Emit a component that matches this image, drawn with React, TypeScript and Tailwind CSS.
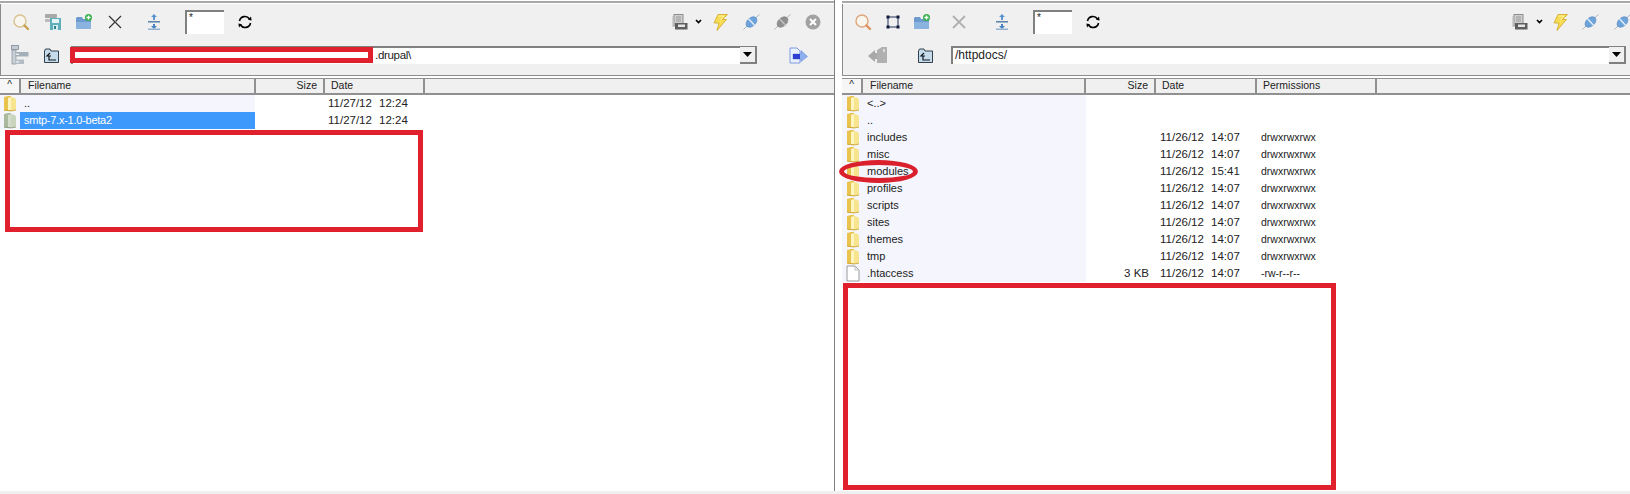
const FolderIcon = ({ dim = false }: { dim?: boolean }) => (
  <svg width="14" height="17" viewBox="0 0 14 17" className="shrink-0">
    <path d="M1 2 L5 1 L8 1 L8 16 L2 16 L1 15 Z" fill={dim ? "#a9b99c" : "#e8c44e"} />
    <path d="M8 2 L12 3 L13 5 L13 15 L11 16 L8 16 Z" fill={dim ? "#c8d4bc" : "#f7e48e"} />
    <path d="M5 3 L8 2 L8 15 L5 15 Z" fill={dim ? "#d4dccb" : "#fdf4c0"} />
    <path d="M1 15 L8 16 L13 15" stroke={dim ? "#8c9c80" : "#c9a136"} strokeWidth="0.8" fill="none" />
  </svg>
);

const DocIcon = () => (
  <svg width="14" height="17" viewBox="0 0 14 17" className="shrink-0">
    <path d="M1 1 H9 L13 5 V16 H1 Z" fill="#fff" stroke="#9a9a9a" />
    <path d="M9 1 V5 H13" fill="none" stroke="#bdbdbd" />
  </svg>
);

const SearchIcon = ({ light = false }: { light?: boolean }) => (
  <svg width="18" height="18" viewBox="0 0 18 18">
    <circle cx="8" cy="8" r="6" fill="#f7f5ee" stroke={light ? "#dfa67c" : "#d9c28e"} strokeWidth="1.4" />
    <path d="M12.5 12.5 L16 16" stroke={light ? "#e08f5e" : "#c9a04e"} strokeWidth="2.4" strokeLinecap="round" />
  </svg>
);

const ServerIcon = () => (
  <svg width="18" height="18" viewBox="0 0 18 18">
    <rect x="1" y="1" width="12" height="4" rx="1" fill="#a8a8a8" />
    <rect x="1" y="6" width="5" height="3" fill="#bcbcbc" />
    <rect x="6" y="5" width="11" height="12" fill="#5fb0bb" />
    <rect x="8" y="6" width="7" height="4" fill="#e4f4f4" />
    <rect x="9" y="12" width="5" height="5" fill="#d6edef" />
    <rect x="10" y="13" width="2" height="3" fill="#2d7f8e" />
  </svg>
);

const SquareIcon = () => (
  <svg width="14" height="14" viewBox="0 0 14 14">
    <rect x="2" y="2" width="10" height="10" fill="none" stroke="#20305a" strokeWidth="1" />
    <rect x="0.5" y="0.5" width="3" height="3" fill="#111a3a" />
    <rect x="10.5" y="0.5" width="3" height="3" fill="#111a3a" />
    <rect x="0.5" y="10.5" width="3" height="3" fill="#111a3a" />
    <rect x="10.5" y="10.5" width="3" height="3" fill="#111a3a" />
  </svg>
);

const NewFolderIcon = () => (
  <svg width="18" height="16" viewBox="0 0 18 16">
    <path d="M1 4 L2 3 L7 3 L8 5 L16 5 L16 15 L1 15 Z" fill="#6d9bd0" />
    <path d="M1 8 L16 8 L16 15 L1 15 Z" fill="#8ab3e0" />
    <circle cx="13.5" cy="3.5" r="3.5" fill="#36b04a" />
    <path d="M13.5 1.5 V5.5 M11.5 3.5 H15.5" stroke="#fff" strokeWidth="1.3" />
  </svg>
);

const CrossIcon = ({ muted = false }: { muted?: boolean }) => (
  <svg width="14" height="14" viewBox="0 0 14 14">
    <path d="M1 1 L13 13 M13 1 L1 13" stroke={muted ? "#b0b0b0" : "#333"} strokeWidth={muted ? 1.8 : 1.2} />
    {!muted && <path d="M2 1 L13 12" stroke="#999" strokeWidth="0.8" />}
  </svg>
);

const FilterIcon = () => (
  <svg width="14" height="16" viewBox="0 0 14 16">
    <path d="M7 0 L10 3 L8 3 L8 6 L6 6 L6 3 L4 3 Z" fill="#5b93cc" />
    <rect x="1" y="7" width="12" height="1.5" fill="#5b7fa8" />
    <path d="M6 10 L8 10 L8 12 L10 12 L7 15 L4 12 L6 12 Z" fill="#4a82bd" />
    <rect x="1" y="14.5" width="12" height="1.5" fill="#8fb2d3" />
  </svg>
);

const RefreshIcon = () => (
  <svg width="14" height="14" viewBox="0 0 14 14" fill="none">
    <path d="M1.5 6 A5.5 5.5 0 0 1 11.5 4" stroke="#000" strokeWidth="1.6" />
    <path d="M12.5 8 A5.5 5.5 0 0 1 2.5 10" stroke="#000" strokeWidth="1.6" />
    <path d="M10 4.8 L13.6 5.4 L13 1.6 Z" fill="#000" />
    <path d="M4 9.2 L0.4 8.6 L1 12.4 Z" fill="#000" />
  </svg>
);

const TreeIcon = () => (
  <svg width="18" height="20" viewBox="0 0 18 20">
    <rect x="0.5" y="0.5" width="7" height="4" fill="#c3ccd4" stroke="#7f8b96" strokeWidth="0.8" />
    <rect x="1" y="5" width="4" height="14" fill="#c9cfd5" stroke="#8d98a2" strokeWidth="0.8" />
    <rect x="5" y="7" width="12.5" height="4.5" fill="#a3afb9" />
    <rect x="5" y="8.5" width="3" height="1.5" fill="#e6eaee" />
    <rect x="4" y="14.5" width="9" height="4.5" fill="#b4bdc5" />
    <rect x="5" y="16" width="3" height="1.5" fill="#e6eaee" />
  </svg>
);

const UpFolderIcon = () => (
  <svg width="15" height="15" viewBox="0 0 15 15">
    <path d="M0.5 3 L1.5 1 L6 1 L7 3 L14.5 3 L14.5 14.5 L0.5 14.5 Z" fill="#c6dceb" stroke="#1e2c3a" strokeWidth="0.9" />
    <path d="M6 5 L3 8 L5 8 L5 12 L12 12 M5 8 L7 8" fill="none" stroke="#101820" strokeWidth="1.2" />
  </svg>
);

const PrinterIcon = () => (
  <svg width="16" height="16" viewBox="0 0 16 16">
    <rect x="2" y="0.5" width="9" height="11" fill="#cfcfcf" stroke="#8e8e8e" />
    <path d="M4 3 H9 M4 5 H9 M4 7 H9" stroke="#9a9a9a" />
    <rect x="0.5" y="2" width="2" height="11" fill="#b9b9b9" />
    <rect x="3" y="9" width="12.5" height="6.5" fill="#5e5e5e" />
    <rect x="6" y="10.5" width="7" height="2.5" fill="#e5e5e5" />
  </svg>
);

const Chevron = () => (
  <svg width="7" height="6" viewBox="0 0 7 6">
    <path d="M1 1 L3.5 3.5 L6 1" fill="none" stroke="#000" strokeWidth="1.7" />
  </svg>
);

const BoltIcon = () => (
  <svg width="15" height="17" viewBox="0 0 15 17">
    <path d="M5 0.5 L14.5 0.5 L9.5 5.5 L13.5 5.5 L4 16.5 L6 9 L1 9 Z" fill="#f7dc55" stroke="#d5ad2a" strokeWidth="0.9" />
    <path d="M5.5 2 L11 2 L7.5 6" fill="none" stroke="#fff3a8" strokeWidth="1" />
  </svg>
);

const PlugIcon = ({ off = false }: { off?: boolean }) => {
  const body = off ? "#8f8f8f" : "#6fa3dc";
  const edge = off ? "#808080" : "#4f82bd";
  const line = off ? "#b3b3b3" : "#a6b4c4";
  const band = off ? "#c4c4c4" : "#e3effa";
  return (
    <svg width="17" height="16" viewBox="0 0 17 16">
      <path d="M0.5 15.5 L4 12 M13 3.5 L16.5 0.5" stroke={line} strokeWidth="1" />
      <ellipse cx="8.5" cy="8" rx="6.2" ry="4.2" transform="rotate(-42 8.5 8)" fill={body} stroke={edge} strokeWidth="0.6" />
      <path d="M5.5 4.8 L11.5 11.2" stroke={band} strokeWidth="1.4" />
    </svg>
  );
};

const CloseCircleIcon = () => (
  <svg width="16" height="16" viewBox="0 0 16 16">
    <circle cx="8" cy="8" r="7.5" fill="#a2a2a2" />
    <path d="M5 5 L11 11 M11 5 L5 11" stroke="#fff" strokeWidth="2" />
  </svg>
);

const SendIcon = () => (
  <svg width="19" height="17" viewBox="0 0 19 17">
    <path d="M1 1 H8 L11 4 V16 H1 Z" fill="#eaf0fb" stroke="#7f9be0" />
    <path d="M4 7 H12 V3.5 L18.5 9.5 L12 14.5 V12 H4 Z" fill="#8fb0ee" stroke="#6d8fe0" strokeWidth="0.6" />
    <rect x="4" y="7" width="7" height="5" fill="#2d3fd0" />
  </svg>
);

const BackIcon = () => (
  <svg width="20" height="17" viewBox="0 0 20 17">
    <path d="M0 9 L7 3 L7 6 L10 6 L10 12 L7 12 L7 15 Z" fill="#a8a8a8" />
    <path d="M9 3 L14 0 L19 0 L19 16 L9 16 Z" fill="#b0b0b0" />
    <rect x="15" y="2" width="2" height="3" fill="#dcdcdc" />
  </svg>
);

const Slot = ({ w, children }: { w: string; children: React.ReactNode }) => (
  <div className={`${w} shrink-0 flex items-center justify-center`}>{children}</div>
);

const FilterBox = () => (
  <div className="w-[39px] h-[24px] shrink-0 bg-white border-t-2 border-l-2 border-[#808080] text-[10px] leading-[12px] pl-[2px] text-[#222]">
    *
  </div>
);

const Combo = ({ children, className }: { children?: React.ReactNode; className: string }) => (
  <div className={`${className} h-[18px] bg-white border-t-2 border-l-2 border-[#808080] flex items-stretch text-[12px] leading-[15px] text-[#222]`}>
    <div className="flex-1 pl-[2px] whitespace-nowrap overflow-hidden">{children}</div>
    <div className="w-[17px] h-[17px] -mt-[1px] bg-[#f0f0f0] border-r-2 border-b-2 border-[#808080] flex items-center justify-center">
      <svg width="9" height="5" viewBox="0 0 9 5">
        <path d="M0 0 H9 L4.5 5 Z" fill="#000" />
      </svg>
    </div>
  </div>
);

type Col = { label: string; w: string; right?: boolean };

const HeaderRow = ({ cols }: { cols: Col[] }) => (
  <div className="h-[17px] mt-[2px] flex shrink-0 bg-[#f0f0f0] border-t border-b-2 border-[#909090] text-[10.5px] leading-[13px] text-[#222]">
    <div className="w-[21px] shrink-0 border-r-2 border-[#909090] bg-[#f6f6f6] text-center text-[10px] leading-[12px]">^</div>
    {cols.map((c, i) => (
      <div
        key={c.label}
        className={`${c.w} shrink-0 border-r-2 border-[#909090] ${c.right ? "text-right pr-[6px]" : i === 0 ? "pl-[7px]" : "pl-[6px]"}`}
      >
        {c.label}
      </div>
    ))}
  </div>
);

type Row = { name: string; file?: boolean; size?: string; date?: string; time?: string; perm?: string; selected?: boolean };

const ListRow = ({ row, leadW, nameW, sizeW, dateW }: { row: Row; leadW: string; nameW: string; sizeW: string; dateW: string }) => (
  <div className="h-[17px] flex text-[11.5px] leading-[16px] text-[#222]">
    <div className={`${leadW} shrink-0 bg-[#f5f6fd] flex justify-center pl-[3px] pr-[3px]`}>
      {row.file ? <DocIcon /> : <FolderIcon dim={row.selected} />}
    </div>
    <div className={`${nameW} shrink-0 pl-[4px] text-[11px] ${row.selected ? "bg-[#3d99fb] text-white tracking-[-0.25px]" : "bg-[#f5f6fd]"}`}>{row.name}</div>
    <div className={`${sizeW} shrink-0 text-right pr-[6px]`}>{row.size}</div>
    <div className={`${dateW} shrink-0 pl-[5px] flex`}>
      <span className="w-[51px] shrink-0">{row.date}</span>
      <span>{row.time}</span>
    </div>
    <div className="pl-[6px] text-[10.5px]">{row.perm}</div>
  </div>
);

const leftRows: Row[] = [
  { name: "..", date: "11/27/12", time: "12:24" },
  { name: "smtp-7.x-1.0-beta2", date: "11/27/12", time: "12:24", selected: true },
];

const dirDate = { date: "11/26/12", time: "14:07", perm: "drwxrwxrwx" };

const rightRows: Row[] = [
  { name: "<..>" },
  { name: ".." },
  { name: "includes", ...dirDate },
  { name: "misc", ...dirDate },
  { name: "modules", ...dirDate, time: "15:41" },
  { name: "profiles", ...dirDate },
  { name: "scripts", ...dirDate },
  { name: "sites", ...dirDate },
  { name: "themes", ...dirDate },
  { name: "tmp", ...dirDate },
  { name: ".htaccess", file: true, size: "3 KB", date: "11/26/12", time: "14:07", perm: "-rw-r--r--" },
];

export default function App() {
  return (
    <div className="relative w-[1630px] h-[494px] bg-white overflow-hidden flex [font-family:'Liberation_Sans',Arial,sans-serif]">
      {/* local pane */}
      <div className="w-[835px] h-[491px] shrink-0 flex flex-col border-r border-[#808080] pt-[1px]">
        <div className="h-[2px] bg-[#a8a8a8] shrink-0" />
        <div className="h-[72px] mt-[1px] shrink-0 bg-[#f0f0f0] border-l border-b border-[#8c8c8c] flex flex-col">
          <div className="h-[36px] flex items-center pl-[4px]">
            <Slot w="w-[32px]"><SearchIcon /></Slot>
            <Slot w="w-[31px]"><ServerIcon /></Slot>
            <Slot w="w-[31px]"><NewFolderIcon /></Slot>
            <Slot w="w-[32px]"><CrossIcon /></Slot>
            <Slot w="w-[46px]"><FilterIcon /></Slot>
            <div className="ml-[8px]"><FilterBox /></div>
            <Slot w="w-[42px]"><RefreshIcon /></Slot>
            <div className="ml-auto flex items-center pr-[6px]">
              <Slot w="w-[24px]"><PrinterIcon /></Slot>
              <Slot w="w-[12px]"><Chevron /></Slot>
              <Slot w="w-[32px]"><BoltIcon /></Slot>
              <Slot w="w-[31px]"><PlugIcon /></Slot>
              <Slot w="w-[31px]"><PlugIcon off /></Slot>
              <Slot w="w-[30px]"><CloseCircleIcon /></Slot>
            </div>
          </div>
          <div className="h-[30px] flex items-center pl-[4px]">
            <Slot w="w-[30px]"><TreeIcon /></Slot>
            <Slot w="w-[32px]"><UpFolderIcon /></Slot>
            <Combo className="w-[686px] shrink-0 ml-[4px]">
              <span className="pl-[300px] text-[11.5px] tracking-[-0.3px]">.drupal\</span>
            </Combo>
            <div className="ml-[11px]"><Slot w="w-[60px]"><SendIcon /></Slot></div>
          </div>
        </div>
        <HeaderRow
          cols={[
            { label: "Filename", w: "w-[235px]" },
            { label: "Size", w: "w-[69px]", right: true },
            { label: "Date", w: "w-[100px]" },
          ]}
        />
        <div className="flex-1">
          {leftRows.map((r) => (
            <ListRow key={r.name} row={r} leadW="w-[20px]" nameW="w-[235px]" sizeW="w-[68px]" dateW="w-[100px]" />
          ))}
        </div>
      </div>

      {/* remote pane */}
      <div className="ml-[7px] flex-1 min-w-0 h-[490px] flex flex-col pt-[1px]">
        <div className="h-[2px] bg-[#a8a8a8] shrink-0" />
        <div className="h-[72px] mt-[1px] shrink-0 bg-[#f0f0f0] border-l border-b border-[#8c8c8c] flex flex-col">
          <div className="h-[36px] flex items-center pl-[5px]">
            <Slot w="w-[30px]"><SearchIcon light /></Slot>
            <Slot w="w-[29px]"><SquareIcon /></Slot>
            <Slot w="w-[30px]"><NewFolderIcon /></Slot>
            <Slot w="w-[44px]"><CrossIcon muted /></Slot>
            <Slot w="w-[42px]"><FilterIcon /></Slot>
            <div className="ml-[10px]"><FilterBox /></div>
            <Slot w="w-[42px]"><RefreshIcon /></Slot>
            <div className="ml-auto flex items-center -mr-[8px]">
              <Slot w="w-[24px]"><PrinterIcon /></Slot>
              <Slot w="w-[14px]"><Chevron /></Slot>
              <Slot w="w-[28px]"><BoltIcon /></Slot>
              <Slot w="w-[32px]"><PlugIcon /></Slot>
              <Slot w="w-[32px]"><PlugIcon /></Slot>
            </div>
          </div>
          <div className="h-[30px] flex items-center pl-[5px]">
            <Slot w="w-[60px]"><BackIcon /></Slot>
            <Slot w="w-[34px]"><UpFolderIcon /></Slot>
            <Combo className="flex-1 ml-[9px] mr-[4px]">/httpdocs/</Combo>
          </div>
        </div>
        <HeaderRow
          cols={[
            { label: "Filename", w: "w-[223px]" },
            { label: "Size", w: "w-[70px]", right: true },
            { label: "Date", w: "w-[101px]" },
            { label: "Permissions", w: "w-[120px]" },
          ]}
        />
        <div className="flex-1">
          {rightRows.map((r) => (
            <ListRow key={r.name} row={r} leadW="w-[21px]" nameW="w-[223px]" sizeW="w-[69px]" dateW="w-[100px]" />
          ))}
        </div>
      </div>

      {/* bottom edge */}
      <div className="absolute left-0 right-0 bottom-0 h-[3px] bg-[#f0f0f0]" />

      {/* red annotations drawn over the screenshot */}
      <div className="absolute left-[70px] top-[47px] w-[303px] h-[16px] border-[5px] border-[#e0202c] bg-white" />
      <div className="absolute left-[5px] top-[130px] w-[418px] h-[102px] border-[5px] border-[#e0202c] bg-white" />
      <div className="absolute left-[843px] top-[283px] w-[493px] h-[207px] border-[5px] border-[#e0202c] bg-white" />
      <div className="absolute left-[839px] top-[160px] w-[79px] h-[23px] rounded-[50%] border-[5px] border-[#d9202c]" />
    </div>
  );
}
